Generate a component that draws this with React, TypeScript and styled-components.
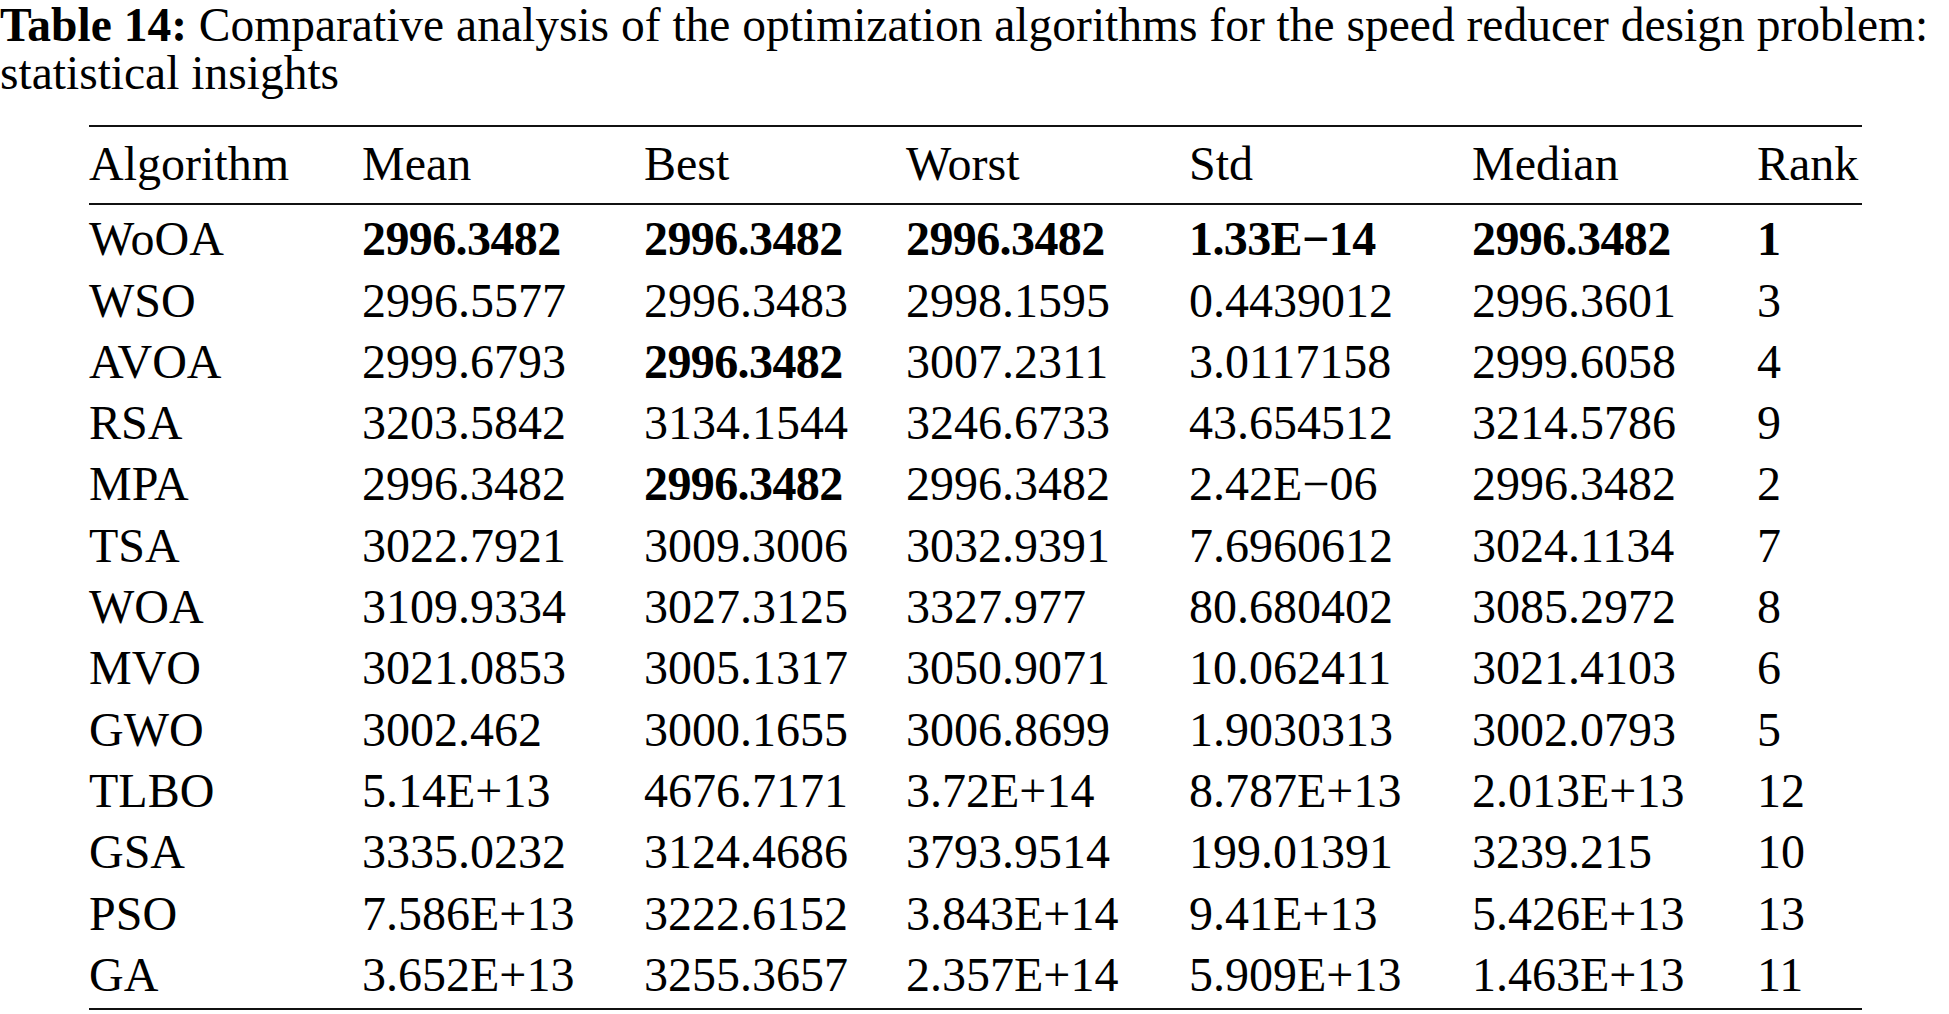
import React from "react";
import styled, { createGlobalStyle } from "styled-components";

const GlobalStyle = createGlobalStyle`
  html, body {
    margin: 0;
    padding: 0;
    background: #ffffff;
  }
  body {
    font-family: "Liberation Serif", "Times New Roman", serif;
    color: #000000;
  }
`;

interface Row {
  name: string;
  cells: string[];
  bold: boolean[];
}

const columns = ["Algorithm", "Mean", "Best", "Worst", "Std", "Median", "Rank"];

const rows: Row[] = [
  { name: "WoOA", cells: ["2996.3482", "2996.3482", "2996.3482", "1.33E−14", "2996.3482", "1"], bold: [true, true, true, true, true, true] },
  { name: "WSO", cells: ["2996.5577", "2996.3483", "2998.1595", "0.4439012", "2996.3601", "3"], bold: [] },
  { name: "AVOA", cells: ["2999.6793", "2996.3482", "3007.2311", "3.0117158", "2999.6058", "4"], bold: [false, true] },
  { name: "RSA", cells: ["3203.5842", "3134.1544", "3246.6733", "43.654512", "3214.5786", "9"], bold: [] },
  { name: "MPA", cells: ["2996.3482", "2996.3482", "2996.3482", "2.42E−06", "2996.3482", "2"], bold: [false, true] },
  { name: "TSA", cells: ["3022.7921", "3009.3006", "3032.9391", "7.6960612", "3024.1134", "7"], bold: [] },
  { name: "WOA", cells: ["3109.9334", "3027.3125", "3327.977", "80.680402", "3085.2972", "8"], bold: [] },
  { name: "MVO", cells: ["3021.0853", "3005.1317", "3050.9071", "10.062411", "3021.4103", "6"], bold: [] },
  { name: "GWO", cells: ["3002.462", "3000.1655", "3006.8699", "1.9030313", "3002.0793", "5"], bold: [] },
  { name: "TLBO", cells: ["5.14E+13", "4676.7171", "3.72E+14", "8.787E+13", "2.013E+13", "12"], bold: [] },
  { name: "GSA", cells: ["3335.0232", "3124.4686", "3793.9514", "199.01391", "3239.215", "10"], bold: [] },
  { name: "PSO", cells: ["7.586E+13", "3222.6152", "3.843E+14", "9.41E+13", "5.426E+13", "13"], bold: [] },
  { name: "GA", cells: ["3.652E+13", "3255.3657", "2.357E+14", "5.909E+13", "1.463E+13", "11"], bold: [] },
];

const Page = styled.div`
  width: 1949px;
  min-height: 1014px;
`;

const Caption = styled.p`
  margin: 0;
  padding-top: 1px;
  font-size: 47.5px;
  line-height: 48px;
  width: 1949px;
`;

const CaptionLabel = styled.b`
  font-weight: 700;
`;

const Table = styled.div`
  margin: 28px 0 0 89px;
  width: 1773px;
  border-top: 2px solid #111;
  border-bottom: 2.5px solid #111;
  font-size: 48px;
`;

const Head = styled.div`
  padding: 6px 0 9px;
  border-bottom: 2px solid #111;
`;

const Body = styled.div`
  padding: 3px 0 3px;
`;

const GridRow = styled.div`
  display: grid;
  grid-template-columns: 273px 282px 262px 283px 283px 285px 105px;
  height: 61.3px;
  line-height: 61px;
  white-space: nowrap;
`;

const Cell = styled.span<{ $bold?: boolean }>`
  font-weight: ${(p) => (p.$bold ? 700 : 400)};
  letter-spacing: ${(p) => (p.$bold ? "-0.6px" : "0")};
`;

export default function App() {
  return (
    <Page>
      <GlobalStyle />
      <Caption>
        <CaptionLabel>Table 14:</CaptionLabel> Comparative analysis of the optimization algorithms for the speed
        reducer design problem: statistical insights
      </Caption>
      <Table>
        <Head>
          <GridRow>
            {columns.map((c) => (
              <Cell key={c}>{c}</Cell>
            ))}
          </GridRow>
        </Head>
        <Body>
          {rows.map((r) => (
            <GridRow key={r.name}>
              <Cell>{r.name}</Cell>
              {r.cells.map((v, i) => (
                <Cell key={i} $bold={!!r.bold[i]}>
                  {v}
                </Cell>
              ))}
            </GridRow>
          ))}
        </Body>
      </Table>
    </Page>
  );
}
